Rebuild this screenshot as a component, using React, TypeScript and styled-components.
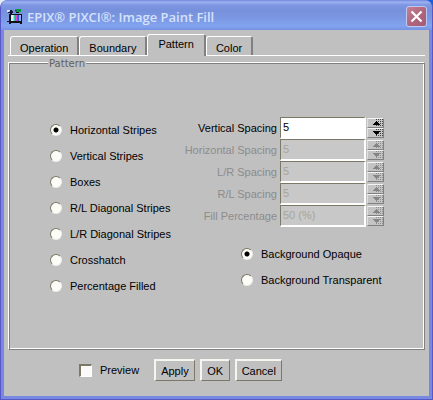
import React, { useState } from "react";
import styled, { createGlobalStyle, css } from "styled-components";

const face = "#c0c0c0";
const shadow = "#808080";
const olive = "#7c7866";

const GlobalStyle = createGlobalStyle`
  * { box-sizing: border-box; }
  body {
    margin: 0;
    background: linear-gradient(90deg, #e4ecfa 50%, #1560dc 50%);
    font: 11px/14px "Liberation Sans", Arial, sans-serif;
    color: #000;
  }
  button, input { font: inherit; color: inherit; margin: 0; }
`;

const Window = styled.main`
  border: 1px solid #5558c6;
  border-top: 0;
  border-radius: 8px 8px 0 0;
  background: #7688e0;
  padding: 0 3px 3px;
  overflow: hidden;
`;

const TitleBar = styled.header`
  display: flex;
  align-items: center;
  height: 30px;
  margin: 0 -3px;
  padding: 3px 5px 0 6px;
  background: linear-gradient(
    #6f86dc 0,
    #9db2f2 2px,
    #7f97e2 5px,
    #7790dc 10px,
    #7b97e2 18px,
    #83a4ef 26px,
    #7691e2 30px
  );
`;

const Title = styled.h1`
  flex: 1;
  margin: 0 0 0 4px;
  font: 600 13px/20px "Open Sans", "Noto Sans", sans-serif;
  color: #d6e2fc;
  white-space: nowrap;
`;

const CloseButton = styled.button`
  display: grid;
  place-items: center;
  width: 21px;
  height: 21px;
  padding: 0;
  border: 1px solid #bfc8f2;
  border-radius: 3px;
  background: linear-gradient(135deg, #c48292, #b0667c 50%, #a25c78);
`;

const Client = styled.div`
  background: ${face};
  padding: 4px 4px 15px;
`;

const TabBar = styled.div`
  display: flex;
  align-items: flex-end;
  padding-left: 2px;
  border-bottom: 1px solid #fff;
`;

const Tab = styled.button<{ $active: boolean }>`
  height: 19px;
  padding: 3px 9px 0;
  border: 1px solid;
  border-width: 1px 2px 0 1px;
  border-color: #fff ${shadow} transparent #fff;
  border-radius: 3px 3px 0 0;
  background: ${face};
  line-height: 14px;
  ${(p) =>
    p.$active &&
    css`
      height: 22px;
      margin-bottom: -1px;
      padding: 1px 10px 4px;
    `}
`;

const Group = styled.fieldset`
  min-width: 0;
  margin: 0;
  padding: 49px 8px 50px 41px;
  border: 1px solid;
  border-color: #fff ${shadow} ${shadow} #fff;
  box-shadow: inset 1px 1px ${shadow}, inset -1px -1px #fff;
`;

const Legend = styled.legend`
  height: 12px;
  margin-left: -2px;
  padding: 0 1px;
  background: ${face};
  color: #606060;
  font: 10px/16px "DejaVu Sans", sans-serif;
`;

const Columns = styled.div`
  display: grid;
  grid-template-columns: 137px 1fr;
`;

const RadioList = styled.div<{ $indent?: boolean }>`
  display: grid;
  grid-auto-rows: 26px;
  ${(p) =>
    p.$indent &&
    css`
      margin-top: 14px;
      padding-left: 54px;
    `}
`;

const Choice = styled.label`
  display: flex;
  align-items: center;
  gap: 8px;
  white-space: nowrap;
`;

const Radio = styled.input.attrs({ type: "radio" })`
  appearance: none;
  width: 12px;
  height: 12px;
  border: 1px solid;
  border-color: ${olive} #eee #eee ${olive};
  border-radius: 50%;
  background: #fdfdf8;
  &:checked {
    background: radial-gradient(circle, #000 0 2px, #fdfdf8 3px);
  }
`;

const CheckBox = styled.input.attrs({ type: "checkbox" })`
  appearance: none;
  width: 13px;
  height: 13px;
  border: 2px solid;
  border-width: 2px 1px 1px 2px;
  border-color: ${olive} #fff #fff ${olive};
  background: #fbf9f9;
  &:checked {
    background: radial-gradient(circle, #000 0 3px, #fbf9f9 4px);
  }
`;

const Settings = styled.div``;

const FieldRow = styled.div<{ $disabled: boolean }>`
  display: grid;
  grid-template-columns: 92px 86px 17px;
  column-gap: 1px;
  height: 22px;
  align-items: start;
  color: ${(p) => (p.$disabled ? "#8c8c8c" : "#000")};
`;

const FieldLabel = styled.label`
  display: flex;
  justify-content: flex-end;
  padding-right: 2px;
  line-height: 22px;
  white-space: nowrap;
`;

const Field = styled.input`
  width: 100%;
  height: 22px;
  padding: 0 2px 2px;
  border: 2px solid;
  border-width: 1px 2px 2px 1px;
  border-color: ${olive} #fff #fff ${olive};
  background: #fff;
  &:disabled {
    background: #c8c8c8;
    color: #a6a69c;
  }
`;

const Spinner = styled.div`
  display: grid;
  grid-template-rows: 10px 10px;
  padding-top: 1px;
`;

const SpinButton = styled.button`
  display: block;
  padding: 0;
  border: 1px solid;
  border-color: #f4f4f4 ${shadow} ${shadow} #e0e0e0;
  background: #c4c4c4;
  svg { display: block; }
`;

const Footer = styled.footer`
  display: flex;
  align-items: center;
  gap: 5px;
  padding: 9px 0 0 71px;
`;

const Preview = styled(Choice)`
  margin-right: 10px;
`;

const PushButton = styled.button`
  min-width: 30px;
  height: 22px;
  padding: 0 5px;
  border: 2px solid;
  border-width: 2px 1px 1px 2px;
  border-color: #f6f6f0 ${olive} ${olive} #f6f6f0;
  background: ${face};
`;

function AppIcon() {
  return (
    <svg width="16" height="16" viewBox="0 0 16 16" shapeRendering="crispEdges" aria-hidden="true">
      <path d="M0 1h3v1H0zM0 2h2v1H0z" fill="#d8e8ff" />
      <path d="M3 1h2v1h1v2H5v1H3V4H1V3h2z" fill="#101838" />
      <path d="M2 5h1v7h1v1H4v2H2v-2H0v-1h2z" fill="#101838" />
      <path d="M8 0h6v3H8z" fill="#079a48" />
      <path d="M8 1h2v1H8zM12 1h1v1h-1z" fill="#075a40" />
      <path d="M9 3h3v1H9z" fill="#111" />
      <path d="M3 5h12v9H3z" fill="#111" />
      <path d="M4 6h2v6H4z" fill="#dff0f8" />
      <path d="M6 6h1v6H6z" fill="#e8dc36" />
      <path d="M7 6h1v6H7z" fill="#28d4b0" />
      <path d="M8 6h1v6H8z" fill="#22b83c" />
      <path d="M9 6h1v6H9z" fill="#e048c8" />
      <path d="M10 6h1v6h-1z" fill="#d83a3a" />
      <path d="M11 6h1v6h-1z" fill="#2c4df0" />
      <path d="M12 6h2v6h-2z" fill="#9cacec" />
      <path d="M13 14h2v1h-2z" fill="#111" />
    </svg>
  );
}

function CloseIcon() {
  return (
    <svg width="13" height="13" viewBox="0 0 13 13" aria-hidden="true">
      <path d="M1.5 1.5l10 10M11.5 1.5l-10 10" stroke="#fff" strokeWidth="2.2" />
    </svg>
  );
}

function SpinIcon({ down, disabled }: { down?: boolean; disabled: boolean }) {
  const ink = disabled ? "#858585" : "#000";
  const dots: React.ReactNode[] = [];
  for (let y = 0; y < 4; y++) {
    for (let x = 0; x < 4; x++) {
      dots.push(<rect key={`${x}-${y}`} x={8 + x * 2} y={y * 2} width="1" height="1" />);
    }
  }
  return (
    <svg width="15" height="8" viewBox="0 0 15 8" shapeRendering="crispEdges" aria-hidden="true">
      <g fill={disabled ? "#8e8e8e" : "#444"}>{dots}</g>
      <path
        d={down ? "M5 2h7v1h-1v1h-1v1H9v1H8V5H7V4H6V3H5z" : "M8 2h1v1h1v1h1v1h1v1H5V5h1V4h1V3h1z"}
        fill={ink}
      />
    </svg>
  );
}

const tabs = ["Operation", "Boundary", "Pattern", "Color"];
const patterns = [
  "Horizontal Stripes",
  "Vertical Stripes",
  "Boxes",
  "R/L Diagonal Stripes",
  "L/R Diagonal Stripes",
  "Crosshatch",
  "Percentage Filled",
];
const backgrounds = ["Background Opaque", "Background Transparent"];
const fields = [
  { id: "vertical", label: "Vertical Spacing", value: "5", disabled: false },
  { id: "horizontal", label: "Horizontal Spacing", value: "5", disabled: true },
  { id: "lr", label: "L/R Spacing", value: "5", disabled: true },
  { id: "rl", label: "R/L Spacing", value: "5", disabled: true },
  { id: "fill", label: "Fill Percentage", value: "50 (%)", disabled: true },
];

function SpinField({ id, label, value, disabled }: (typeof fields)[number]) {
  const [text, setText] = useState(value);
  const step = (by: number) => setText((t) => String(Math.max(0, (parseInt(t, 10) || 0) + by)));
  return (
    <FieldRow $disabled={disabled}>
      <FieldLabel htmlFor={id}>{label}</FieldLabel>
      <Field id={id} value={text} disabled={disabled} onChange={(e) => setText(e.target.value)} />
      <Spinner>
        <SpinButton type="button" aria-label={`Increase ${label}`} disabled={disabled} onClick={() => step(1)}>
          <SpinIcon disabled={disabled} />
        </SpinButton>
        <SpinButton type="button" aria-label={`Decrease ${label}`} disabled={disabled} onClick={() => step(-1)}>
          <SpinIcon down disabled={disabled} />
        </SpinButton>
      </Spinner>
    </FieldRow>
  );
}

export default function App() {
  const [tab, setTab] = useState("Pattern");
  return (
    <>
      <GlobalStyle />
      <Window>
        <TitleBar>
          <AppIcon />
          <Title>EPIX® PIXCI®: Image Paint Fill</Title>
          <CloseButton type="button" aria-label="Close">
            <CloseIcon />
          </CloseButton>
        </TitleBar>
        <Client>
          <TabBar role="tablist">
            {tabs.map((name) => (
              <Tab
                key={name}
                type="button"
                role="tab"
                aria-selected={name === tab}
                $active={name === tab}
                onClick={() => setTab(name)}
              >
                {name}
              </Tab>
            ))}
          </TabBar>
          <Group>
            <Legend>Pattern</Legend>
            <Columns>
              <RadioList>
                {patterns.map((name, i) => (
                  <Choice key={name}>
                    <Radio name="pattern" defaultChecked={i === 0} />
                    {name}
                  </Choice>
                ))}
              </RadioList>
              <Settings>
                {fields.map((f) => (
                  <SpinField key={f.id} {...f} />
                ))}
                <RadioList $indent>
                  {backgrounds.map((name, i) => (
                    <Choice key={name}>
                      <Radio name="background" defaultChecked={i === 0} />
                      {name}
                    </Choice>
                  ))}
                </RadioList>
              </Settings>
            </Columns>
          </Group>
          <Footer>
            <Preview>
              <CheckBox />
              Preview
            </Preview>
            <PushButton type="button">Apply</PushButton>
            <PushButton type="button">OK</PushButton>
            <PushButton type="button">Cancel</PushButton>
          </Footer>
        </Client>
      </Window>
    </>
  );
}
